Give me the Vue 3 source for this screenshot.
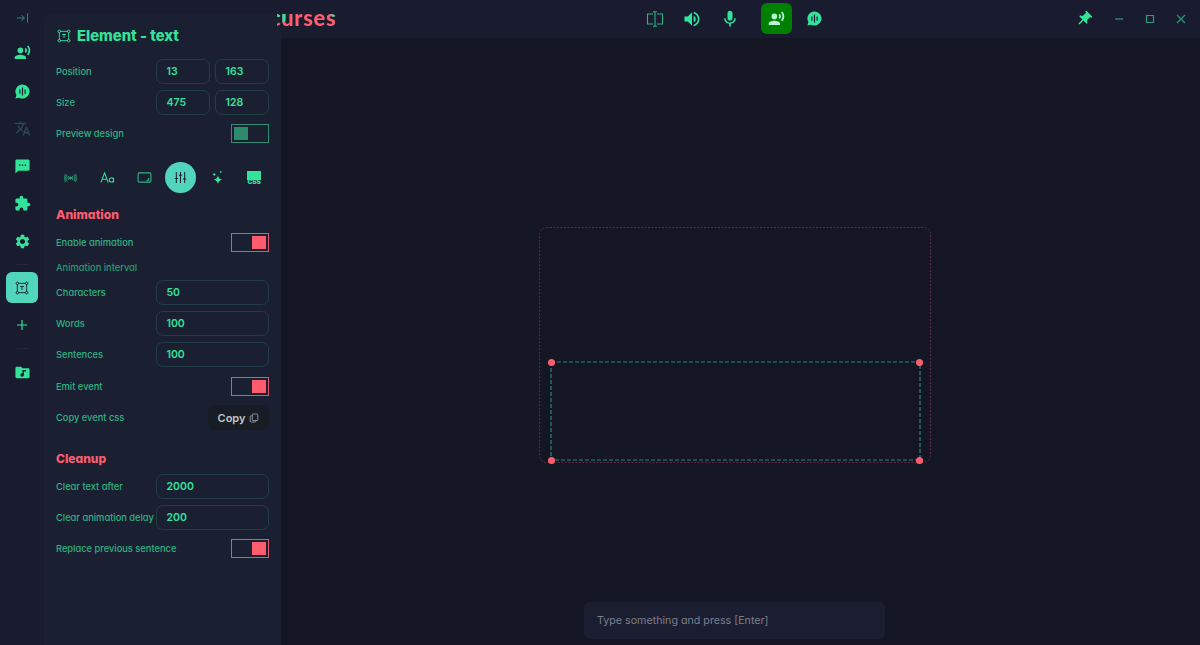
<template>
  <div class="app">
    <header class="topbar">
      <div class="top-center">
        <span class="slot dim">
          <svg class="bracket" viewBox="0 0 18 16" fill="none" stroke="currentColor" stroke-width="1.1"><path d="M7 3H1.500v10H7M11 3h5.500v10H11M7 .8h4M7 15.200h4M9 .8v14.400" /></svg>
        </span>
        <span class="slot"><svg class="ic big" viewBox="0 0 24 24"><path :d="icons.volume" /></svg></span>
        <span class="slot"><svg class="ic big" viewBox="0 0 24 24"><path :d="icons.mic" /></svg></span>
        <div class="live-btn">
          <svg class="ic" viewBox="0 0 24 24"><path :d="icons.voice" /></svg>
        </div>
        <span class="slot"><svg class="ic" viewBox="0 0 24 24"><path fill-rule="evenodd" :d="icons.bubble" /></svg></span>
      </div>
      <div class="top-right">
        <svg class="pin" viewBox="0 0 24 24"><path :d="icons.pin" /></svg>
        <div class="win-controls">
          <svg viewBox="0 0 10 10"><path d="M1 5h8" /></svg>
          <svg viewBox="0 0 10 10"><path d="M1.500 1.500h7v7h-7z" /></svg>
          <svg viewBox="0 0 10 10"><path d="M1 1l8 8M9 1l-8 8" /></svg>
        </div>
      </div>
    </header>

    <div class="body">
      <nav class="sidebar">
        <svg class="collapse" viewBox="0 0 14 12" fill="none" stroke="currentColor"><path d="M1 6h8M6 3l3 3-3 3M12.500 1v10" /></svg>
        <svg class="ic nav-voice" viewBox="0 0 24 24"><path :d="icons.voice" /></svg>
        <svg class="ic nav-bubble" viewBox="0 0 24 24"><path fill-rule="evenodd" :d="icons.bubble" /></svg>
        <svg class="ic nav-translate" viewBox="0 0 24 24"><path :d="icons.translate" /></svg>
        <svg class="ic nav-chat" viewBox="0 0 24 24"><path :d="icons.chat" /></svg>
        <svg class="ic nav-ext" viewBox="0 0 24 24"><path :d="icons.extension" /></svg>
        <svg class="ic nav-gear" viewBox="0 0 24 24"><path :d="icons.gear" /></svg>
        <div class="nav-sep"></div>
        <div class="nav-active">
          <svg class="frame-ic" viewBox="0 0 18 18" fill="none" stroke="currentColor" stroke-width="1.200"><use href="#frame" /></svg>
        </div>
        <svg class="nav-plus" viewBox="0 0 12 12" fill="none" stroke="currentColor" stroke-width="1.200"><path d="M6 1v10M1 6h10" /></svg>
        <div class="nav-sep second"></div>
        <svg class="ic nav-folder" viewBox="0 0 24 24"><path fill-rule="evenodd" :d="icons.folder" /></svg>
      </nav>

      <main class="canvas">
        <svg class="bounds" viewBox="0 0 392 236" fill="none"><rect x=".5" y=".5" width="391" height="235" rx="7" stroke="#5e2b41" stroke-dasharray="2 1.500" /></svg>
        <div class="element">
          <svg viewBox="0 0 371 100" fill="none"><rect x="1" y="1" width="369" height="98" stroke="#2d8480" stroke-width="1.200" stroke-dasharray="4 2" /></svg>
          <i class="handle tl"></i><i class="handle tr"></i><i class="handle bl"></i><i class="handle br"></i>
        </div>
        <div class="chat-input">Type something and press [Enter]</div>
      </main>
    </div>

    <aside class="panel">
      <h2 class="panel-title">
        <svg class="frame-ic title-ic" viewBox="0 0 18 18" fill="none" stroke="currentColor" stroke-width="1.200">
          <defs>
            <g id="frame">
              <path d="M4.500 3h9M4.500 15h9M3 4.500v9M15 4.500v9" />
              <circle cx="3" cy="3" r="1.600" /><circle cx="15" cy="3" r="1.600" /><circle cx="3" cy="15" r="1.600" /><circle cx="15" cy="15" r="1.600" />
              <path d="M6.500 7h5M9 7v4.500" />
            </g>
          </defs>
          <use href="#frame" />
        </svg>
        Element - text
      </h2>

      <div class="row">
        <label>Position</label>
        <div class="pair"><div class="field">13</div><div class="field">163</div></div>
      </div>
      <div class="row">
        <label>Size</label>
        <div class="pair"><div class="field">475</div><div class="field">128</div></div>
      </div>
      <div class="row">
        <label>Preview design</label>
        <div class="toggle off"><i></i></div>
      </div>

      <div class="tabs">
        <span class="tab dim">
          <svg class="tab-signal" viewBox="0 0 16 12" fill="none" stroke="currentColor"><circle cx="8" cy="6" r="1.200" fill="currentColor" /><path d="M5.800 3.500c-1 1.500-1 3.500 0 5M10.200 3.500c1 1.500 1 3.500 0 5M3.800 2c-1.600 2.500-1.600 5.500 0 8M12.200 2c1.600 2.500 1.600 5.500 0 8M1.800 1c-1.200 3-1.200 7 0 10M14.200 1c1.200 3 1.200 7 0 10" /></svg>
        </span>
        <span class="tab">
          <svg class="tab-text" viewBox="0 0 16 12" fill="none" stroke="currentColor" stroke-width="1.100"><path d="M.8 11.500 4.800 1l4 10.500M2.200 8h5.200" /><circle cx="12.300" cy="8.700" r="2.300" /><path d="M14.600 6.200v5.300" /></svg>
        </span>
        <span class="tab dim">
          <svg class="tab-box" viewBox="0 0 16 12" fill="none" stroke="currentColor" stroke-width="1.200"><rect x="1" y="1" width="14" height="10" rx="1.500" /><path d="M12.500 6.500v2.500h-2.500" /></svg>
        </span>
        <span class="tab tab-active">
          <svg class="tab-sliders" viewBox="0 0 14 14" fill="none" stroke="currentColor" stroke-width="1.100"><path d="M2.500 1v12M7 1v12M11.500 1v12M.8 8h3.400M5.300 4.500h3.400M9.800 8.500h3.400" /></svg>
        </span>
        <span class="tab">
          <svg class="tab-spark" viewBox="0 0 14 16"><path d="M7.500 5.500c.6 3 1.600 4 4.500 4.800-2.900.7-3.900 1.800-4.500 4.700-.6-2.900-1.600-4-4.500-4.700 2.900-.8 3.900-1.800 4.500-4.800z" /><path d="M3.500 2.500c.3 1.300.8 1.800 2 2.200-1.200.3-1.700.8-2 2.100-.3-1.300-.8-1.800-2-2.100 1.200-.4 1.700-.9 2-2.200zM10.500 .5c.2 1 .5 1.300 1.500 1.500-1 .2-1.300.5-1.500 1.500-.2-1-.5-1.300-1.500-1.500 1-.2 1.300-.5 1.500-1.500z" /></svg>
        </span>
        <span class="tab css-tab"><b></b><em>CSS</em></span>
      </div>

      <h3 class="section">Animation</h3>
      <div class="row short">
        <label>Enable animation</label>
        <div class="toggle"><i></i></div>
      </div>
      <div class="sub-label">Animation interval</div>
      <div class="row" v-for="item in intervals" :key="item.label">
        <label>{{ item.label }}</label>
        <div class="field wide">{{ item.value }}</div>
      </div>
      <div class="row tight emit">
        <label>Emit event</label>
        <div class="toggle"><i></i></div>
      </div>
      <div class="row">
        <label>Copy event css</label>
        <button class="copy-btn">
          Copy
          <svg viewBox="0 0 10 10" fill="none" stroke="currentColor" stroke-width=".9"><rect x="3.300" y="1" width="5.500" height="6.500" rx=".8" /><path d="M3.300 2.800H2A.8.8 0 0 0 1.200 3.600V8.200A.8.8 0 0 0 2 9h4a.8.8 0 0 0 .8-.8V7.500" /></svg>
        </button>
      </div>

      <h3 class="section cleanup">Cleanup</h3>
      <div class="row" v-for="item in cleanup" :key="item.label">
        <label>{{ item.label }}</label>
        <div class="field wide">{{ item.value }}</div>
      </div>
      <div class="row tight">
        <label>Replace previous sentence</label>
        <div class="toggle"><i></i></div>
      </div>
    </aside>

    <div class="logo"><span>curses</span></div>
  </div>
</template>

<script setup>
const intervals = [
  { label: "Characters", value: 50 },
  { label: "Words", value: 100 },
  { label: "Sentences", value: 100 },
];

const cleanup = [
  { label: "Clear text after", value: 2000 },
  { label: "Clear animation delay", value: 200 },
];

const icons = {
  voice:
    "M9 5a4 4 0 1 0 0 8 4 4 0 0 0 0-8zM9 15c-2.670 0-8 1.340-8 4v2h16v-2c0-2.660-5.330-4-8-4zM16.760 5.360l-1.680 1.690c.84 1.180.84 2.710 0 3.890l1.680 1.690c2.020-2.020 2.020-5.070 0-7.270zM20.070 2l-1.630 1.630c2.770 3.020 2.770 7.560 0 10.740L20.070 16c3.900-3.890 3.910-9.950 0-14z",
  bubble:
    "M12 2a10 10 0 0 0-8.600 15.100L2 22l5-1.300A10 10 0 1 0 12 2zM7.500 9h1.600v6H7.500zM11.200 6.500h1.600v11h-1.600zM14.900 9h1.600v6h-1.600z",
  translate:
    "M12.870 15.070l-2.540-2.510.03-.03c1.740-1.940 2.980-4.170 3.710-6.530H17V4h-7V2H8v2H1v1.990h11.170C11.500 7.920 10.440 9.750 9 11.350 8.070 10.320 7.300 9.190 6.690 8h-2c.73 1.630 1.730 3.170 2.980 4.560l-5.090 5.020L4 19l5-5 3.110 3.110.76-2.040zM18.500 10h-2L12 22h2l1.120-3h4.750L21 22h2l-4.500-12zm-2.620 7l1.620-4.330L19.120 17h-3.240z",
  chat:
    "M20 2H4c-1.100 0-2 .9-2 2v18l4-4h14c1.100 0 2-.9 2-2V4c0-1.100-.9-2-2-2zM9 11H7V9h2v2zm4 0h-2V9h2v2zm4 0h-2V9h2v2z",
  extension:
    "M20.500 11H19V7c0-1.100-.9-2-2-2h-4V3.500C13 2.120 11.880 1 10.500 1S8 2.120 8 3.500V5H4c-1.100 0-1.990.9-1.990 2v3.800H3.500c1.490 0 2.700 1.210 2.700 2.700s-1.210 2.700-2.700 2.700H2V20c0 1.100.9 2 2 2h3.800v-1.500c0-1.490 1.210-2.700 2.700-2.700 1.490 0 2.700 1.210 2.700 2.700V22H17c1.100 0 2-.9 2-2v-4h1.500c1.380 0 2.500-1.120 2.500-2.500S21.880 11 20.500 11z",
  gear:
    "M19.140 12.940c.04-.3.06-.61.06-.94 0-.32-.02-.64-.07-.94l2.030-1.580c.18-.14.23-.41.12-.61l-1.920-3.320c-.12-.22-.37-.29-.59-.22l-2.390.96c-.5-.38-1.030-.7-1.620-.94l-.36-2.540c-.04-.24-.24-.41-.48-.41h-3.840c-.24 0-.43.17-.47.41l-.36 2.540c-.59.24-1.130.57-1.620.94l-2.390-.96c-.22-.08-.47 0-.59.22L2.740 8.870c-.12.21-.08.47.12.61l2.030 1.580c-.05.3-.09.63-.09.94s.02.64.07.94l-2.030 1.580c-.18.14-.23.41-.12.61l1.920 3.320c.12.22.37.29.59.22l2.390-.96c.5.38 1.030.7 1.620.94l.36 2.540c.05.24.24.41.48.41h3.840c.24 0 .44-.17.47-.41l.36-2.540c.59-.24 1.130-.56 1.620-.94l2.390.96c.22.08.47 0 .59-.22l1.920-3.320c.12-.22.07-.47-.12-.61l-2.010-1.580zM12 15.600c-1.980 0-3.600-1.620-3.600-3.600s1.620-3.600 3.600-3.600 3.600 1.620 3.600 3.600-1.620 3.600-3.600 3.600z",
  volume:
    "M3 9v6h4l5 5V4L7 9H3zm13.500 3c0-1.770-1.020-3.290-2.500-4.030v8.050c1.480-.73 2.500-2.250 2.500-4.020zM14 3.230v2.060c2.890.86 5 3.540 5 6.710s-2.110 5.850-5 6.710v2.060c4.010-.91 7-4.490 7-8.770s-2.990-7.860-7-8.770z",
  mic:
    "M12 14c1.660 0 3-1.340 3-3V5c0-1.660-1.340-3-3-3S9 3.340 9 5v6c0 1.660 1.340 3 3 3zm5.300-3c0 3-2.540 5.100-5.300 5.100S6.700 14 6.700 11H5c0 3.410 2.720 6.230 6 6.720V21h2v-3.280c3.280-.48 6-3.300 6-6.720h-1.700z",
  pin:
    "M16 9V4h1c.55 0 1-.45 1-1s-.45-1-1-1H7c-.55 0-1 .45-1 1s.45 1 1 1h1v5c0 1.660-1.340 3-3 3v2h5.970v7l1 1 1-1v-7H19v-2c-1.660 0-3-1.340-3-3z",
  folder:
    "M20 6h-8l-2-2H4c-1.100 0-2 .9-2 2v12c0 1.100.9 2 2 2h16c1.100 0 2-.9 2-2V8c0-1.100-.9-2-2-2zM17 10.500h-3v5a2.500 2.500 0 1 1-2-2.450V8.500h5z",
};
</script>

<style scoped>
.app {
  position: relative;
  width: 1200px;
  height: 645px;
  overflow: hidden;
  display: flex;
  flex-direction: column;
  background: #141623;
  color: #33e39a;
  font-family: Inter, "Liberation Sans", sans-serif;
  font-feature-settings: "cv11" 1;
}
.ic {
  width: 17px;
  height: 17px;
  fill: currentColor;
  flex: none;
}
.ic.big {
  width: 20px;
  height: 20px;
}
.dim {
  color: #2fb382;
}

/* top bar */
.topbar {
  position: relative;
  height: 38px;
  flex: none;
  background: #181c2e;
}
.logo {
  position: absolute;
  left: 277px;
  top: 4px;
  width: 64px;
  overflow: hidden;
  font-family: Lato, sans-serif;
  font-weight: 900;
  font-size: 22px;
  line-height: 27px;
  letter-spacing: .6px;
}
.logo span {
  display: block;
  margin-left: -7px;
  background:
    radial-gradient(circle at 8px 8px, #33e39a 0 11px, transparent 11.500px),
    radial-gradient(circle at 72px 6px, #33e39a 0 12px, transparent 12.500px),
    #ff5c6e;
  -webkit-background-clip: text;
  background-clip: text;
  color: transparent;
}
.top-center {
  position: absolute;
  left: 636px;
  top: 3px;
  height: 31px;
  display: flex;
  align-items: center;
}
.slot {
  width: 37.500px;
  display: flex;
  justify-content: center;
}
.bracket {
  width: 18px;
  height: 16px;
}
.live-btn {
  width: 31px;
  height: 31px;
  margin: 0 4px 0 12.500px;
  border-radius: 6px;
  background: #008000;
  color: #b7f5d6;
  display: flex;
  align-items: center;
  justify-content: center;
}
.top-right {
  position: absolute;
  right: 14px;
  top: 10px;
  display: flex;
  align-items: center;
  gap: 21px;
}
.pin {
  width: 18px;
  height: 18px;
  fill: currentColor;
  transform: rotate(45deg);
}
.win-controls {
  display: flex;
  gap: 21px;
}
.win-controls svg {
  width: 10px;
  height: 10px;
  fill: none;
  stroke: #2a9a7a;
  stroke-width: 1.200;
}

/* left rail */
.body {
  flex: 1;
  display: flex;
  min-height: 0;
}
.sidebar {
  width: 44px;
  flex: none;
  margin-top: -38px;
  padding-top: 12px;
  background: #181c2e;
  display: flex;
  flex-direction: column;
  align-items: center;
  z-index: 1;
}
.collapse {
  width: 13px;
  height: 12px;
  color: #2a9a7a;
}
.nav-voice { margin-top: 20px; }
.nav-bubble { margin-top: 22px; }
.nav-translate { margin-top: 20px; color: #2b4a52; }
.nav-chat { margin-top: 21px; }
.nav-ext { margin-top: 20px; }
.nav-gear { margin-top: 21px; }
.nav-sep {
  width: 12px;
  height: 1px;
  margin-top: 14px;
  background: #232738;
}
.nav-active {
  width: 32px;
  height: 31px;
  margin-top: 7px;
  border-radius: 6px;
  background: #52d6bb;
  color: #1a2030;
  display: flex;
  align-items: center;
  justify-content: center;
}
.frame-ic {
  width: 14px;
  height: 14px;
}
.nav-plus {
  width: 12px;
  height: 12px;
  margin-top: 16px;
  color: #33e39a;
}
.nav-sep.second { margin-top: 17px; }
.nav-folder { margin-top: 15px; }

/* canvas */
.canvas {
  position: relative;
  flex: 1;
  background: #141623;
}
.bounds {
  position: absolute;
  left: 495px;
  top: 189px;
  width: 392px;
  height: 236px;
}
.element {
  position: absolute;
  left: 506px;
  top: 323px;
  width: 371px;
  height: 100px;
}
.element svg {
  display: block;
  width: 371px;
  height: 100px;
}
.handle {
  position: absolute;
  width: 7px;
  height: 7px;
  border-radius: 50%;
  background: #ff5c6e;
}
.tl { left: -2.500px; top: -2.500px; }
.tr { right: -2px; top: -2.500px; }
.bl { left: -2.500px; bottom: -2.500px; }
.br { right: -2px; bottom: -2.500px; }
.chat-input {
  position: absolute;
  left: 540px;
  top: 564px;
  width: 301px;
  height: 37px;
  box-sizing: border-box;
  padding-left: 13px;
  line-height: 37px;
  border-radius: 6px;
  background: #1a1e30;
  color: #7c7f8c;
  font-size: 10.700px;
}

/* settings panel */
.panel {
  position: absolute;
  left: 44px;
  top: 14px;
  bottom: 0;
  width: 237px;
  box-sizing: border-box;
  padding: 12px 12px 0;
  border-radius: 6px 6px 0 0;
  background: #1b1f32;
  display: flex;
  flex-direction: column;
}
.panel-title {
  margin: 0 0 13px;
  height: 20px;
  display: flex;
  align-items: center;
  gap: 6px;
  font-size: 14.800px;
  font-weight: 800;
}
.title-ic {
  width: 14px;
  height: 14px;
  margin-left: 1px;
}
.row {
  height: 25px;
  margin-bottom: 6px;
  display: flex;
  align-items: center;
  justify-content: space-between;
}
.row label {
  font-size: 9.300px;
  font-weight: 500;
  color: #2fb382;
  white-space: nowrap;
}
.pair {
  display: flex;
  gap: 5px;
}
.field {
  width: 54px;
  height: 25px;
  box-sizing: border-box;
  padding-left: 9.500px;
  line-height: 23px;
  border: 1px solid #1f3f45;
  border-radius: 7px;
  font-size: 10.500px;
  font-weight: 600;
}
.field.wide {
  width: 113px;
}
.toggle {
  width: 38px;
  height: 19px;
  box-sizing: border-box;
  padding: 2px;
  display: flex;
  justify-content: flex-end;
  border: 1px solid #e0566a;
}
.toggle i {
  width: 14px;
  height: 13px;
  background: #ff5c6e;
}
.toggle.off {
  justify-content: flex-start;
  border-color: #2e8f70;
}
.toggle.off i {
  background: #2e8a6c;
}
.tabs {
  margin: 10px -3.500px 0;
  height: 31px;
  display: grid;
  grid-template-columns: repeat(6, 1fr);
  justify-items: center;
  align-items: center;
}
.tab {
  width: 16px;
  height: 31px;
  display: flex;
  align-items: center;
  justify-content: center;
}
.tab svg {
  flex: none;
}
.tab-signal { width: 13px; height: 10px; }
.tab-text { width: 15px; height: 11px; }
.tab-box { width: 15px; height: 11px; }
.tab-sliders { width: 13px; height: 13px; }
.tab-spark {
  width: 13px;
  height: 15px;
  fill: #33e39a;
}
.tab-active {
  width: 31px;
  border-radius: 50%;
  background: #52d6bb;
  color: #1a2030;
}
.css-tab {
  flex-direction: column;
}
.css-tab b {
  width: 14px;
  height: 9px;
  background: #33e39a;
}
.css-tab em {
  font-style: normal;
  font-weight: 900;
  font-size: 6.500px;
  line-height: 5px;
}
.section {
  margin: 14px 0 0;
  font-size: 12.200px;
  line-height: 16px;
  font-weight: 800;
  color: #ff5c6e;
}
.section.cleanup {
  margin-top: 15px;
  margin-bottom: 7px;
  font-size: 12px;
}
.row.short {
  margin-top: 7px;
  margin-bottom: 0;
}
.sub-label {
  margin: 7px 0 6px;
  font-size: 9.300px;
  font-weight: 500;
  line-height: 12px;
  color: #2a9a74;
}
.row.tight {
  margin-top: 0;
}
.row.emit {
  margin-top: 1px;
}
.copy-btn {
  width: 61px;
  height: 25px;
  border: none;
  border-radius: 7px;
  background: #181c24;
  color: #c2c5c9;
  font: inherit;
  font-size: 11px;
  font-weight: 600;
  display: flex;
  align-items: center;
  justify-content: center;
  gap: 4px;
  padding: 0;
}
.copy-btn svg {
  width: 10px;
  height: 10px;
  color: #9a9da3;
}
</style>
